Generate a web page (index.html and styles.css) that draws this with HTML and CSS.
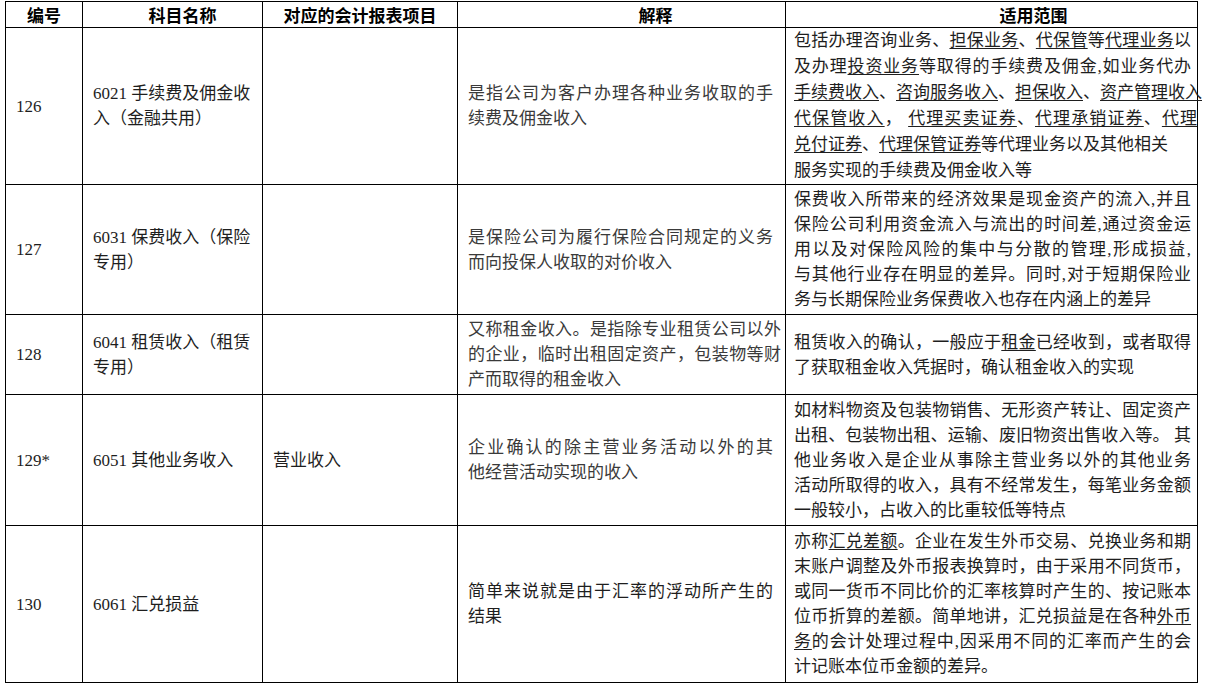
FILE: index.html
```html
<!DOCTYPE html>
<html lang="zh-CN">
<head>
<meta charset="utf-8">
<title>会计科目表</title>
<link rel="stylesheet" href="styles.css">
</head>
<body>
<div class="wrap">
<table class="grid">
  <colgroup>
    <col class="c1"><col class="c2"><col class="c3"><col class="c4"><col class="c5">
  </colgroup>
  <thead>
    <tr class="rh">
      <th>编号</th>
      <th class="h2">科目名称</th>
      <th>对应的会计报表项目</th>
      <th class="h4">解释</th>
      <th class="h5">适用范围</th>
    </tr>
  </thead>
  <tbody>
    <tr class="r1">
      <td class="num">126</td>
      <td><div>6021 手续费及佣金收</div><div>入（金融共用）</div></td>
      <td></td>
      <td class="ex"><div class="j">是指公司为客户办理各种业务收取的手</div><div>续费及佣金收入</div></td>
      <td class="sc tall">
        <div class="j">包括办理咨询业务、<u>担保业务</u>、<u>代保管</u>等<u>代理业务</u>以</div>
        <div class="j">及办理<u>投资业务</u>等取得的手续费及佣金,如业务代办</div>
        <div class="over"><u>手续费收入</u>、<u>咨询服务收入</u>、<u>担保收入</u>、<u>资产管理收入</u></div>
        <div class="j over2"><u>代保管收入</u>，&nbsp;<u>代理买卖证券</u>、<u>代理承销证券</u>、<u>代理</u></div>
        <div><u>兑付证券</u>、<u>代理保管证券</u>等代理业务以及其他相关</div>
        <div>服务实现的手续费及佣金收入等</div>
      </td>
    </tr>
    <tr class="r2">
      <td class="num">127</td>
      <td><div>6031 保费收入（保险</div><div>专用）</div></td>
      <td></td>
      <td class="ex"><div class="j">是保险公司为履行保险合同规定的义务</div><div>而向投保人收取的对价收入</div></td>
      <td class="sc">
        <div class="j">保费收入所带来的经济效果是现金资产的流入,并且</div>
        <div class="j">保险公司利用资金流入与流出的时间差,通过资金运</div>
        <div class="j">用以及对保险风险的集中与分散的管理,形成损益,</div>
        <div class="j">与其他行业存在明显的差异。同时,对于短期保险业</div>
        <div>务与长期保险业务保费收入也存在内涵上的差异</div>
      </td>
    </tr>
    <tr class="r3">
      <td class="num">128</td>
      <td><div>6041 租赁收入（租赁</div><div>专用）</div></td>
      <td></td>
      <td class="ex">
        <div class="j wide">又称租金收入。是指除专业租赁公司以外</div>
        <div class="j wide">的企业，临时出租固定资产，包装物等财</div>
        <div>产而取得的租金收入</div>
      </td>
      <td class="sc">
        <div class="j">租赁收入的确认，一般应于<u>租金</u>已经收到，或者取得</div>
        <div>了获取租金收入凭据时，确认租金收入的实现</div>
      </td>
    </tr>
    <tr class="r4">
      <td class="num">129*</td>
      <td>6051 其他业务收入</td>
      <td>营业收入</td>
      <td class="ex"><div class="j">企业确认的除主营业务活动以外的其</div><div>他经营活动实现的收入</div></td>
      <td class="sc">
        <div class="j">如材料物资及包装物销售、无形资产转让、固定资产</div>
        <div class="j">出租、包装物出租、运输、废旧物资出售收入等。&nbsp;其</div>
        <div class="j">他业务收入是企业从事除主营业务以外的其他业务</div>
        <div class="j">活动所取得的收入，具有不经常发生，每笔业务金额</div>
        <div>一般较小，占收入的比重较低等特点</div>
      </td>
    </tr>
    <tr class="r5">
      <td class="num">130</td>
      <td>6061 汇兑损益</td>
      <td></td>
      <td class="ex ink"><div class="j">简单来说就是由于汇率的浮动所产生的</div><div>结果</div></td>
      <td class="sc">
        <div class="j">亦称<u>汇兑差额</u>。企业在发生外币交易、兑换业务和期</div>
        <div class="j">末账户调整及外币报表换算时，由于采用不同货币，</div>
        <div class="j">或同一货币不同比价的汇率核算时产生的、按记账本</div>
        <div class="j">位币折算的差额。简单地讲，汇兑损益是在各种<u>外币</u></div>
        <div class="j"><u>务</u>的会计处理过程中,因采用不同的汇率而产生的会</div>
        <div>计记账本位币金额的差异。</div>
      </td>
    </tr>
  </tbody>
</table>
</div>
</body>
</html>
```

FILE: styles.css
```css
html, body {
  margin: 0;
  padding: 0;
  background: #ffffff;
}

body {
  font-family: "Liberation Serif", "Noto Sans CJK SC", serif;
  font-size: 17px;
  color: #1e1e1e;
}

.wrap {
  padding: 1px 0 0 5px;
}

.grid {
  border-collapse: collapse;
  table-layout: fixed;
  width: 1193px;
}

.c1 { width: 77px; }
.c2 { width: 180px; }
.c3 { width: 195px; }
.c4 { width: 328px; }
.c5 { width: 412px; }

.grid th,
.grid td {
  border: 1px solid #000;
  vertical-align: middle;
  line-height: 25px;
  padding: 0 8px 0 10px;
  text-align: left;
  font-weight: normal;
}

.grid th {
  font-family: "Noto Sans CJK SC", sans-serif;
  font-weight: bold;
  color: #000;
  text-align: center;
  padding: 0;
  font-size: 17px;
  line-height: 24px;
}

.grid th.h2 { padding-left: 20px; }
.grid th.h4 { padding-left: 68px; }
.grid th.h5 { padding-left: 84px; }

.rh { height: 26px; }
.r1 { height: 157px; }
.r2 { height: 130px; }
.r3 { height: 80px; }
.r4 { height: 131px; }
.r5 { height: 157px; }

.grid td.num {
  padding-left: 10px;
}

.grid td.ex {
  color: #3a3a3a;
  padding-right: 12px;
}

.grid td.ex.ink {
  color: #1e1e1e;
}

.grid td.sc {
  padding: 0 6px 0 8px;
}

.grid td.tall {
  line-height: 26px;
}

.j {
  text-align: justify;
  text-align-last: justify;
}

.wide {
  margin-right: -8px;
}

.over {
  margin-right: -16px;
  white-space: nowrap;
}

.over2 {
  margin-right: -6px;
}

u {
  text-decoration: underline;
  text-underline-offset: 2px;
}
```
